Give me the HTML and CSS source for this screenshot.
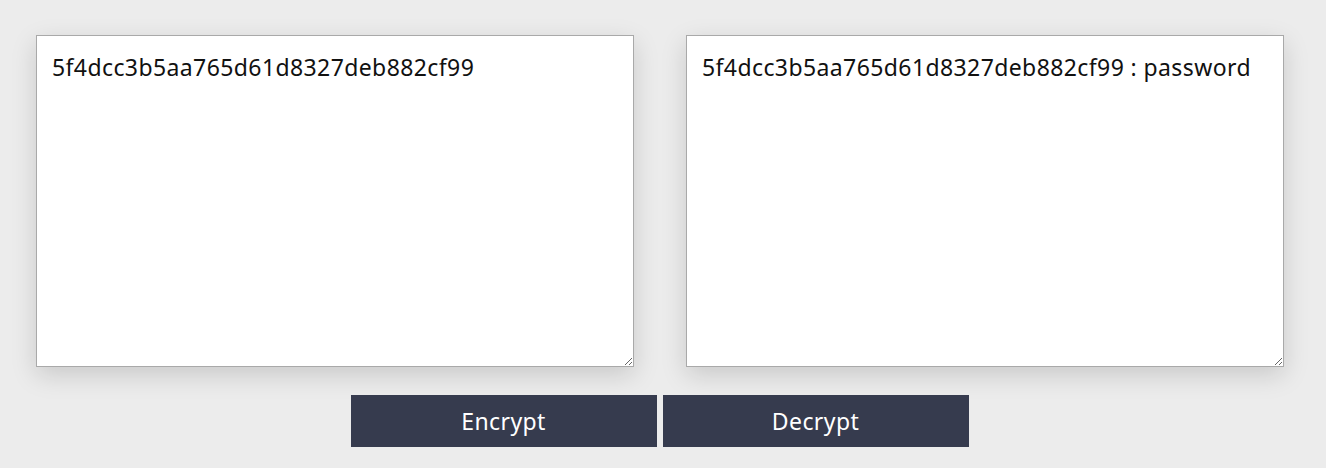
FILE: index.html
```html
<!DOCTYPE html>
<html lang="en">
<head>
    <meta charset="UTF-8">
    <meta name="viewport" content="width=device-width, initial-scale=1.0">
    <title>MD5 Encrypt / Decrypt</title>
    <link rel="stylesheet" href="styles.css">
</head>
<body>
    <div class="boxes">
        <textarea id="input" class="box">5f4dcc3b5aa765d61d8327deb882cf99</textarea>
        <textarea id="output" class="box">5f4dcc3b5aa765d61d8327deb882cf99 : password</textarea>
    </div>
    <div class="actions">
        <button type="button" id="encrypt">Encrypt</button>
        <button type="button" id="decrypt">Decrypt</button>
    </div>
</body>
</html>
```

FILE: styles.css
```css
body {
    margin: 0;
    padding: 35px 0 0 0;
    background-color: #ececec;
    font-family: "Noto Sans", "Open Sans", sans-serif;
}
.boxes {
    display: flex;
    justify-content: center;
    gap: 52px;
    padding-right: 6px;
}
.box {
    width: 598px;
    height: 332px;
    box-sizing: border-box;
    padding: 16px 15px;
    border: 1px solid #a9a9a9;
    background-color: #fff;
    color: #111;
    font-family: inherit;
    font-size: 23px;
    letter-spacing: 0.4px;
    line-height: 30px;
    box-shadow: 0 8px 24px rgba(0, 0, 0, 0.15);
    resize: both;
    outline: none;
}
.actions {
    display: flex;
    justify-content: center;
    gap: 6px;
    margin-top: 28px;
    padding-right: 7px;
}
button {
    width: 306px;
    height: 52px;
    background-color: #363b4e;
    color: #fff;
    border: none;
    font-family: inherit;
    font-size: 23px;
    letter-spacing: 0.4px;
    cursor: pointer;
}
button:hover {
    background-color: #2b3040;
}
```
